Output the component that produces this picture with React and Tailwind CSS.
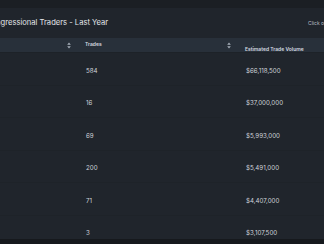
import React from "react";

const rows = [
  ["584", "$66,118,500"],
  ["16", "$37,000,000"],
  ["69", "$5,993,000"],
  ["200", "$5,491,000"],
  ["71", "$4,407,000"],
  ["3", "$3,107,500"],
];

function SortIcon() {
  return (
    <svg width="4" height="7" viewBox="0 0 4 7" className="shrink-0">
      <path d="M2 0.6 L3.8 2.8 L0.2 2.8 Z" fill="#aab2bd" />
      <path d="M2 6.4 L3.8 4.2 L0.2 4.2 Z" fill="#aab2bd" />
    </svg>
  );
}

export default function App() {
  return (
    <div
      className="w-[324px] h-[244px] overflow-hidden bg-[#16191d] flex flex-col"
      style={{ fontFamily: "Inter, 'Noto Sans', sans-serif" }}
    >
      <div className="h-[8px] bg-[#1b1f24] shrink-0" />
      <div className="h-[231px] bg-[#20252c] flex flex-col overflow-hidden shrink-0">
        <div className="h-[30px] flex items-center shrink-0 relative">
          <div className="ml-[-14px] text-[7.6px] text-[#e3e6ea] whitespace-nowrap">
            Congressional Traders - Last Year
          </div>
          <div className="absolute left-[308px] top-[10px] text-[5px] leading-[10px] text-[#b8bec6] whitespace-nowrap">
            Click on
          </div>
        </div>
        <div className="h-[15px] bg-[#28303a] flex items-center shrink-0 border-b border-[#1d2228]">
          <div className="w-[80px] flex items-center justify-end pr-[9px]">
            <SortIcon />
          </div>
          <div className="w-[160px] flex items-center justify-between pl-[5px] pr-[9px]">
            <span className="text-[5px] font-semibold text-[#d6dbe1]">Trades</span>
            <SortIcon />
          </div>
          <div className="flex-1 pl-[5px] whitespace-nowrap">
            <span className="text-[5px] font-semibold text-[#d6dbe1]">Estimated Trade Volume</span>
          </div>
        </div>
        {rows.map(([t, v], i) => (
          <div
            key={i}
            className="h-[32.5px] shrink-0 flex items-center pt-[3px] border-b border-[#1e2329]"
          >
            <div className="w-[80px]" />
            <div className="w-[160px] pl-[6px] text-[6.2px] text-[#cfd4da]">{t}</div>
            <div className="flex-1 pl-[6px] text-[6.2px] text-[#cfd4da]">{v}</div>
          </div>
        ))}
      </div>
    </div>
  );
}
